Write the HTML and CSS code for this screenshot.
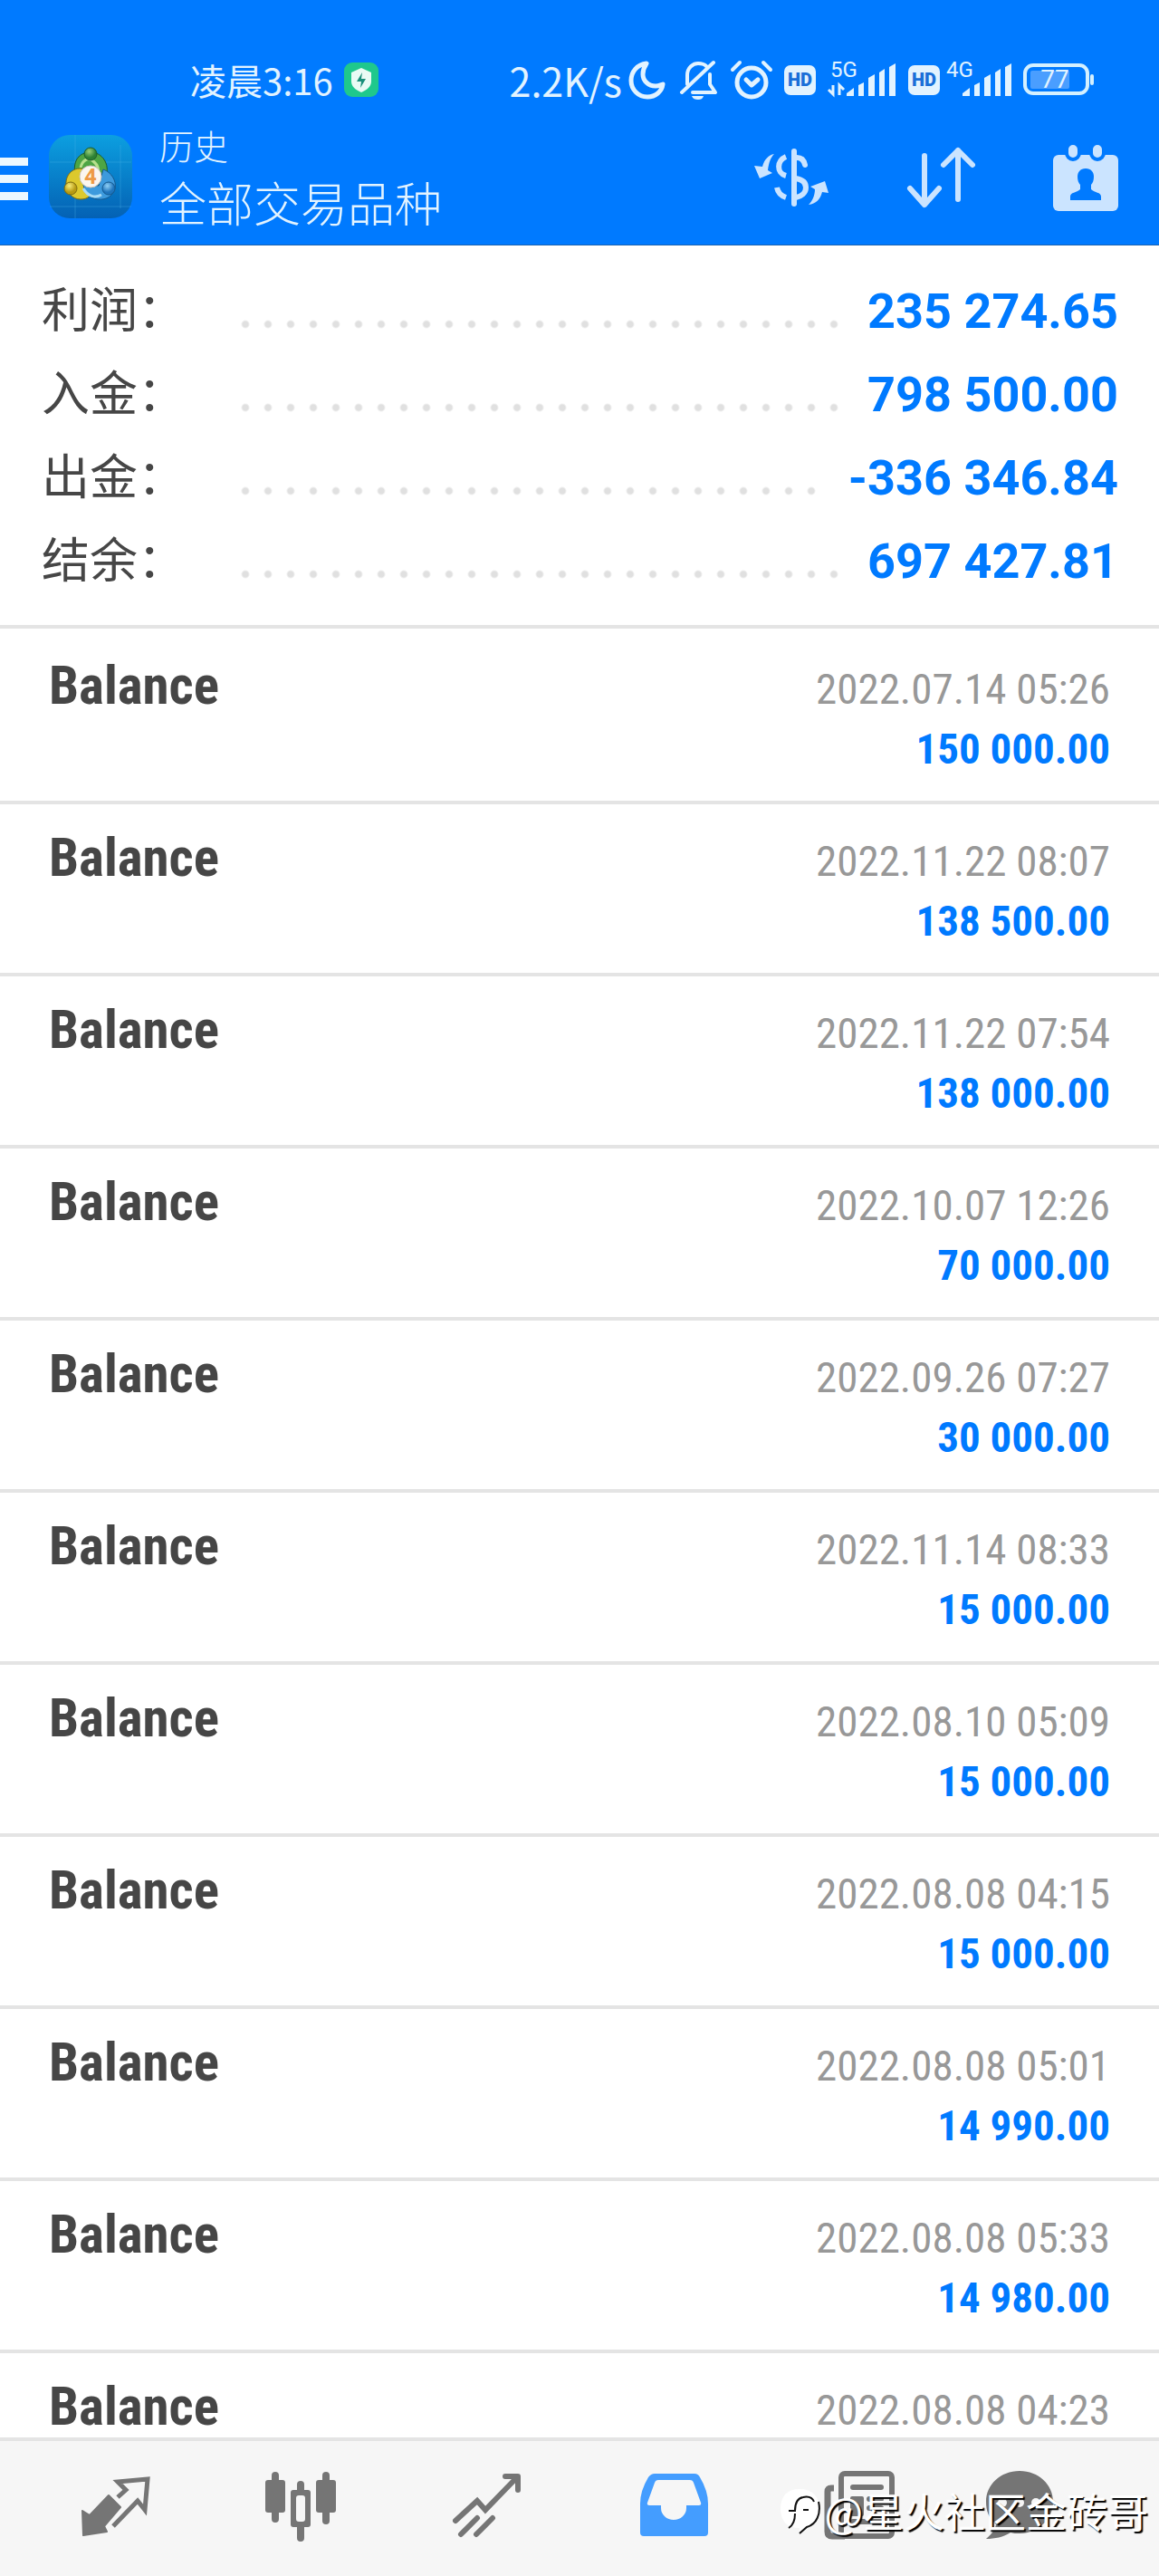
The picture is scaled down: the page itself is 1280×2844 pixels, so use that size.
FILE: index.html
```
<!DOCTYPE html>
<html lang="zh-CN">
<head>
    <meta charset="UTF-8">
    <meta name="viewport" content="width=device-width, initial-scale=1.0">
    <title>历史</title>
    <link rel="stylesheet" href="styles.css">
</head>
<body>
    <div class="app">
        <header class="header">
            <div class="status">
                <span class="time">凌晨3:16</span>
                <svg class="shield" width="38" height="38" viewBox="0 0 38 38">
                    <rect width="38" height="38" rx="9" fill="#1fc88c"/>
                    <path d="M19 6l11 5v10c0 5-4 9-11 12C12 30 8 26 8 21V11z" fill="#e9fbf4"/>
                    <path d="M20 11l-6 10h5l-1 7 6-10h-5z" fill="#1a8f7a"/>
                </svg>
                <div class="status-right">
                    <span class="speed">2.2K/s</span>
                    <svg class="moon" width="40" height="44" viewBox="0 0 40 44">
                        <path d="M19 4C9 5 2 13 2 23c0 10 8 18 18 18 9 0 16-6 17-14-3 1-5 2-8 2-8 0-14-6-14-13 0-5 2-9 4-12z" fill="none" stroke="#e2f3ff" stroke-width="5" stroke-linejoin="round"/>
                    </svg>
                    <svg class="bell" width="42" height="44" viewBox="0 0 42 44">
                        <g fill="none" stroke="#e2f3ff" stroke-width="4" stroke-linecap="round" stroke-linejoin="round">
                            <path d="M2 36L37 3"/>
                            <path d="M8 27V17C8 9 14 4 20 4c4 0 7 1 9 3"/>
                            <path d="M33 16v11l6 9H14"/>
                        </g>
                        <path d="M13 40h13c-1 3-3 4-6 4s-6-1-7-4z" fill="#e2f3ff"/>
                    </svg>
                    <svg class="alarm" width="46" height="44" viewBox="0 0 46 44">
                        <g fill="none" stroke="#e2f3ff" stroke-width="5" stroke-linecap="round" stroke-linejoin="round">
                            <circle cx="23" cy="25" r="16"/>
                            <path d="M17 22l6 6 7-6"/>
                            <path d="M2 11l8-8M44 11l-8-8" stroke-width="4"/>
                        </g>
                    </svg>
                    <span class="hd">HD</span>
                    <svg class="signal" width="76" height="44" viewBox="0 0 76 44">
                        <text x="3" y="19" class="net">5G</text>
                        <path d="M6 28v10l-5-5M13 39V28l5 5" fill="none" stroke="#e2f3ff" stroke-width="3"/>
                        <path d="M21 40v-3l8-6v9zM34 40V28l6-3v15zM45 40V20l7-4v24zM57 40V14l6-4v30zM68 40V8l7-4v36z" fill="#e2f3ff"/>
                    </svg>
                    <span class="hd">HD</span>
                    <svg class="signal second" width="76" height="44" viewBox="0 0 76 44">
                        <text x="3" y="19" class="net">4G</text>
                        <path d="M21 40v-3l8-6v9zM34 40V28l6-3v15zM45 40V20l7-4v24zM57 40V14l6-4v30zM68 40V8l7-4v36z" fill="#e2f3ff"/>
                    </svg>
                    <svg class="battery" width="80" height="44" viewBox="0 0 80 44">
                        <rect x="2" y="6" width="69" height="31" rx="9" fill="none" stroke="#d4f0ff" stroke-width="4"/>
                        <rect x="8" y="12" width="43" height="20" rx="2" fill="#4a9eff"/>
                        <rect x="74" y="16" width="4" height="12" rx="2" fill="#d4f0ff"/>
                        <text x="35" y="31" text-anchor="middle" class="percent">77</text>
                    </svg>
                </div>
            </div>
            <div class="toolbar">
                <button class="menu" type="button" aria-label="菜单"><i></i><i></i><i></i></button>
                <svg class="logo" width="92" height="100" viewBox="0 0 92 100">
                    <defs>
                        <linearGradient id="bg" x1="0" y1="0" x2="0" y2="1">
                            <stop offset="0" stop-color="#0c9fe0"/>
                            <stop offset="1" stop-color="#0461b4"/>
                        </linearGradient>
                        <radialGradient id="green" cx=".4" cy=".3">
                            <stop offset="0" stop-color="#9bd078"/>
                            <stop offset="1" stop-color="#2c8034"/>
                        </radialGradient>
                        <radialGradient id="yellow" cx=".4" cy=".3">
                            <stop offset="0" stop-color="#f6ec7a"/>
                            <stop offset="1" stop-color="#b79a12"/>
                        </radialGradient>
                        <radialGradient id="blue" cx=".4" cy=".3">
                            <stop offset="0" stop-color="#8fd0f5"/>
                            <stop offset="1" stop-color="#1e74bd"/>
                        </radialGradient>
                    </defs>
                    <rect y="1" width="92" height="92" rx="23" fill="url(#bg)"/>
                    <path d="M29 1v92M79 12v70M1 31h90M1 80h90" stroke="#4ab4e8" stroke-opacity=".35" fill="none"/>
                    <g stroke-width="1">
                        <path d="M29 44c-3-15 5-24 17-24s22 12 17 28c-2 5-5 8-8 8l-20-8z" fill="#4da544" stroke="#1d5c28"/>
                        <path d="M40 39c-12-4-22 5-21 17 1 9 7 16 16 16 8 0 12-4 12-10z" fill="#dcc92d" stroke="#7c6b10"/>
                        <path d="M60 39c9 3 15 13 13 21-2 8-9 13-19 12-10-1-15-9-16-16l17 1z" fill="#3d9add" stroke="#14598f"/>
                        <path d="M35 37c2-8 8-12 14-7 5 4 7 10 4 17" fill="none" stroke="#b6e08c" stroke-width="3"/>
                        <path d="M38 60c5 9 13 11 20 7" fill="none" stroke="#a9dcf6" stroke-width="3"/>
                        <circle cx="46" cy="22" r="7" fill="url(#green)" stroke="#1d5c28"/>
                        <circle cx="24" cy="60" r="7" fill="url(#yellow)" stroke="#7c6b10"/>
                        <circle cx="66" cy="60" r="7" fill="url(#blue)" stroke="#14598f"/>
                    </g>
                    <circle cx="46" cy="47" r="12" fill="#fbf6ef" stroke="#c9c2b8"/>
                    <text x="46" y="55" text-anchor="middle" class="four">4</text>
                </svg>
                <div class="titles">
                    <p class="section">历史</p>
                    <h1 class="title">全部交易品种</h1>
                </div>
                <div class="actions">
                    <button type="button" aria-label="货币">
                        <svg width="84" height="72" viewBox="0 0 84 72">
                            <g fill="none" stroke="#cbe4ff" stroke-width="6">
                                <path d="M44 5v58" stroke-linecap="round"/>
                                <path d="M47 12c5 0 8 3 9 8" stroke-linecap="round"/>
                                <path d="M46 35c6 1 11 4 11 10s-5 10-11 11"/>
                                <path d="M35 11c-10 4-11 18 0 21"/>
                                <path d="M25 45c1 5 4 9 10 11"/>
                            </g>
                            <path d="M22 8c-6 1-11 6-13 14l-9-1 6 14 14-6-5-3c1-8 3-14 7-18z" fill="#cbe4ff"/>
                            <path d="M60 64c8-1 13-6 15-14l7 1-4-13-16 6 5 3c0 7-3 13-7 17z" fill="#cbe4ff"/>
                        </svg>
                    </button>
                    <button type="button" aria-label="排序">
                        <svg width="78" height="72" viewBox="0 0 78 72">
                            <g fill="none" stroke="#cbe4ff" stroke-width="6" stroke-linecap="round" stroke-linejoin="round">
                                <path d="M20 10v54M4 46l16 18 16-18"/>
                                <path d="M57 58V4M41 20L57 4l16 16"/>
                            </g>
                        </svg>
                    </button>
                    <button type="button" aria-label="日历">
                        <svg width="72" height="80" viewBox="0 0 72 80">
                            <rect y="13" width="72" height="62" rx="6" fill="#cbe4ff"/>
                            <g fill="#cbe4ff" stroke="#007aff" stroke-width="4">
                                <rect x="15" y="0" width="14" height="18" rx="7"/>
                                <rect x="42" y="0" width="14" height="18" rx="7"/>
                            </g>
                            <path d="M36 28c-6 0-9 4-9 9 0 4 1 7 3 9v5c-4 4-11 3-11 8v4h34v-4c0-5-7-4-11-8v-5c2-2 3-5 3-9 0-5-3-9-9-9z" fill="#007aff"/>
                        </svg>
                    </button>
                </div>
            </div>
        </header>

        <section class="summary">
            <div class="sum-row"><span class="label">利润：</span><span class="leader"></span><span class="value">235 274.65</span></div>
            <div class="sum-row"><span class="label">入金：</span><span class="leader"></span><span class="value">798 500.00</span></div>
            <div class="sum-row"><span class="label">出金：</span><span class="leader"></span><span class="value">-336 346.84</span></div>
            <div class="sum-row"><span class="label">结余：</span><span class="leader"></span><span class="value">697 427.81</span></div>
        </section>

        <ul class="list">
            <li class="item">
                <span class="name">Balance</span>
                <div class="info"><p class="date">2022.07.14 05:26</p><p class="amount">150 000.00</p></div>
            </li>
            <li class="item">
                <span class="name">Balance</span>
                <div class="info"><p class="date">2022.11.22 08:07</p><p class="amount">138 500.00</p></div>
            </li>
            <li class="item">
                <span class="name">Balance</span>
                <div class="info"><p class="date">2022.11.22 07:54</p><p class="amount">138 000.00</p></div>
            </li>
            <li class="item">
                <span class="name">Balance</span>
                <div class="info"><p class="date">2022.10.07 12:26</p><p class="amount">70 000.00</p></div>
            </li>
            <li class="item">
                <span class="name">Balance</span>
                <div class="info"><p class="date">2022.09.26 07:27</p><p class="amount">30 000.00</p></div>
            </li>
            <li class="item">
                <span class="name">Balance</span>
                <div class="info"><p class="date">2022.11.14 08:33</p><p class="amount">15 000.00</p></div>
            </li>
            <li class="item">
                <span class="name">Balance</span>
                <div class="info"><p class="date">2022.08.10 05:09</p><p class="amount">15 000.00</p></div>
            </li>
            <li class="item">
                <span class="name">Balance</span>
                <div class="info"><p class="date">2022.08.08 04:15</p><p class="amount">15 000.00</p></div>
            </li>
            <li class="item">
                <span class="name">Balance</span>
                <div class="info"><p class="date">2022.08.08 05:01</p><p class="amount">14 990.00</p></div>
            </li>
            <li class="item">
                <span class="name">Balance</span>
                <div class="info"><p class="date">2022.08.08 05:33</p><p class="amount">14 980.00</p></div>
            </li>
            <li class="item">
                <span class="name">Balance</span>
                <div class="info"><p class="date">2022.08.08 04:23</p></div>
            </li>
        </ul>

        <nav class="tabs">
            <a href="#quotes" aria-label="行情">
                <svg width="80" height="80" viewBox="0 0 80 80">
                    <path d="M32 27l13 13-18 21 3 6-26 4-1-27 8 5z" fill="#757575" stroke="#757575" stroke-width="2" stroke-linejoin="round"/>
                    <path d="M42 29l9-8-9-9 33-3-3 34-8-10-27 28" fill="none" stroke="#757575" stroke-width="5"/>
                </svg>
            </a>
            <a href="#charts" aria-label="图表">
                <svg width="80" height="80" viewBox="0 0 80 80">
                    <g fill="#757575">
                        <rect x="0" y="10" width="22" height="36" rx="3"/>
                        <rect x="7" y="1" width="8" height="56" rx="4"/>
                        <rect x="56" y="10" width="22" height="36" rx="3"/>
                        <rect x="63" y="1" width="8" height="58" rx="4"/>
                        <rect x="28" y="21" width="22" height="41" rx="3"/>
                        <rect x="35" y="11" width="8" height="67" rx="4"/>
                    </g>
                    <rect x="34" y="27" width="10" height="29" rx="3" fill="#f6f6f6"/>
                </svg>
            </a>
            <a href="#trade" aria-label="交易">
                <svg width="80" height="80" viewBox="0 0 80 80">
                    <g fill="none" stroke="#757575" stroke-width="6" stroke-linecap="round">
                        <path d="M4 55l24-22 9 10L72 7"/>
                        <path d="M59 6h14v15" stroke-linejoin="round"/>
                        <path d="M10 70l18-18M27 70l18-18"/>
                    </g>
                </svg>
            </a>
            <a href="#history" aria-label="历史">
                <svg width="80" height="80" viewBox="0 0 80 80">
                    <path fill-rule="evenodd" d="M18 3h44q4 0 6 4 9 15 9 29v32q0 4-4 4H6q-4 0-4-4V36q0-14 9-29 3-4 7-4zM22 10q-3 0-4 3L10 35q-1 3 2 3h13v3a14 13 0 0 0 28 0v-3h14q3 0 2-3l-8-22q-1-3-4-3z" fill="#449dff"/>
                </svg>
            </a>
            <a href="#news" aria-label="新闻">
                <svg width="80" height="80" viewBox="0 0 80 80">
                    <rect x="19" y="3" width="56" height="69" rx="4" fill="none" stroke="#757575" stroke-width="6"/>
                    <path d="M11 19H8q-4 0-4 4v44q0 5 5 5h14" fill="none" stroke="#757575" stroke-width="7"/>
                    <path d="M32 18h31M50 31h13M50 41h13M32 56h31" stroke="#757575" stroke-width="6" stroke-linecap="round"/>
                    <rect x="29" y="28" width="15" height="22" rx="2" fill="#757575"/>
                </svg>
            </a>
            <a href="#mail" aria-label="信箱">
                <svg width="80" height="80" viewBox="0 0 80 80">
                    <path d="M39 0c21 0 37 15 37 34S60 69 39 69c-4 0-7 0-10-1-8 5-17 7-27 7 6-5 10-10 11-16C5 52 2 44 2 34 2 15 18 0 39 0z" fill="#757575"/>
                    <g fill="#f6f6f6">
                        <circle cx="20" cy="35" r="5"/>
                        <circle cx="39" cy="35" r="5"/>
                        <circle cx="57" cy="35" r="5"/>
                    </g>
                </svg>
            </a>
        </nav>

        <div class="watermark">
            <svg width="50" height="52" viewBox="0 0 50 52">
                <path d="M23 2c14 0 22 8 22 22 0 13-8 20-16 21l-6 5v-5C9 45 2 37 2 24 2 10 9 2 23 2z" fill="#fff"/>
                <path d="M11 26h7c0-9 3-14 9-15 5-1 10 0 12 5" fill="none" stroke="#111" stroke-width="2"/>
                <path d="M44 16c3 13-2 25-13 28l-8 7M18 29c0 8-2 13-7 16" fill="none" stroke="#111" stroke-width="2"/>
                <path d="M27 25h6" stroke="#111" stroke-width="2"/>
            </svg>
            <span>@星火社区金砖哥</span>
        </div>
    </div>
</body>
</html>
```
FILE: styles.css
```
*{
    margin: 0;
    padding: 0;
    box-sizing: border-box;
}
ul{
    list-style: none;
}
button{
    border: none;
    background: none;
}
svg{
    display: block;
    flex: none;
    overflow: visible;
}
body{
    font-family: Roboto, "Noto Sans CJK SC", sans-serif;
    background-color: #fff;
    color: #464646;
}
.app{
    display: flex;
    flex-direction: column;
    height: 100vh;
    position: relative;
}

/* header */
.header{
    flex: none;
    background-color: #007aff;
    border-bottom: 1px solid #1a62b0;
    color: #e2f3ff;
}
.status{
    display: flex;
    align-items: center;
    height: 136px;
    padding: 40px 70px 0 210px;
    font-family: "Noto Sans CJK SC", sans-serif;
    line-height: 52px;
}
.time{
    font-size: 40px;
}
.shield{
    margin-left: 12px;
}
.status-right{
    display: flex;
    align-items: center;
    margin-left: auto;
}
.speed{
    font-size: 43px;
}
.moon{
    margin-left: 8px;
}
.bell{
    margin-left: 16px;
}
.alarm{
    margin-left: 14px;
}
.hd{
    width: 35px;
    height: 33px;
    margin-left: 13px;
    border-radius: 7px;
    background-color: #e2f3ff;
    color: #1a6fd8;
    font: 900 20px/33px Roboto, sans-serif;
    text-align: center;
}
.signal{
    margin-left: 13px;
}
.second{
    margin-left: 4px;
}
.battery{
    margin-left: 12px;
}
.net{
    font: 400 24px Roboto, sans-serif;
    fill: #e2f3ff;
}
.percent{
    font: 400 28px Roboto, sans-serif;
    fill: #e2f3ff;
}
.toolbar{
    display: flex;
    align-items: center;
    height: 134px;
    padding: 0 45px 11px 0;
}
.menu{
    display: flex;
    flex-direction: column;
    gap: 10px;
    width: 31px;
}
.menu i{
    height: 9px;
    background-color: #ecf8ff;
}
.logo{
    margin-left: 23px;
}
.four{
    font: 700 24px Roboto, sans-serif;
    fill: #ee9a45;
}
.titles{
    margin-left: 30px;
    font-family: "Noto Sans CJK SC", sans-serif;
}
.section{
    font-size: 38px;
    font-weight: 300;
    line-height: 50px;
}
.title{
    font-size: 52px;
    font-weight: 300;
    line-height: 76px;
}
.actions{
    display: flex;
    align-items: center;
    gap: 84px;
    margin-left: auto;
}

/* summary */
.summary{
    flex: none;
    padding: 22px 45px 29px 46px;
    border-bottom: 4px solid #e4e4e4;
}
.sum-row{
    display: flex;
    align-items: baseline;
    height: 92px;
    line-height: 92px;
}
.label{
    flex: none;
    width: 220px;
    font-family: "Noto Sans CJK SC", sans-serif;
    font-size: 53px;
    white-space: nowrap;
}
.leader{
    flex: 1;
    align-self: flex-start;
    height: 92px;
    margin-right: 24px;
    background: radial-gradient(circle at 5px 5px, #e0e0e0 3px, transparent 5px) 0 60px / 25px 10px repeat-x;
}
.value{
    color: #007aff;
    font-size: 54px;
    font-weight: 700;
    white-space: nowrap;
}

/* history list */
.list{
    flex: 1;
    min-height: 0;
    overflow: hidden;
    padding-top: 4px;
    font-family: "Roboto Condensed", Roboto, sans-serif;
}
.item{
    display: flex;
    align-items: baseline;
    justify-content: space-between;
    height: 190px;
    padding: 26px 54px 0 54px;
    border-bottom: 4px solid #e4e4e4;
    line-height: 66px;
}
.name{
    font-size: 59px;
    font-weight: 700;
}
.info{
    text-align: right;
}
.date{
    color: #989898;
    font-size: 47px;
}
.amount{
    color: #007aff;
    font-size: 47px;
    font-weight: 700;
}

/* bottom tabs */
.tabs{
    flex: none;
    display: grid;
    grid-template-columns: repeat(5, 7fr) 5fr;
    align-items: center;
    justify-items: center;
    height: 153px;
    padding: 0 80px 3px 25px;
    border-top: 4px solid #e4e4e4;
    background-color: #f6f6f6;
}
.watermark{
    position: absolute;
    right: 12px;
    bottom: 46px;
    display: flex;
    align-items: center;
    color: #fff;
    font-family: "Noto Sans CJK SC", sans-serif;
    font-size: 45px;
    line-height: 52px;
    text-shadow: 2px 2px 1px #000;
}
```
